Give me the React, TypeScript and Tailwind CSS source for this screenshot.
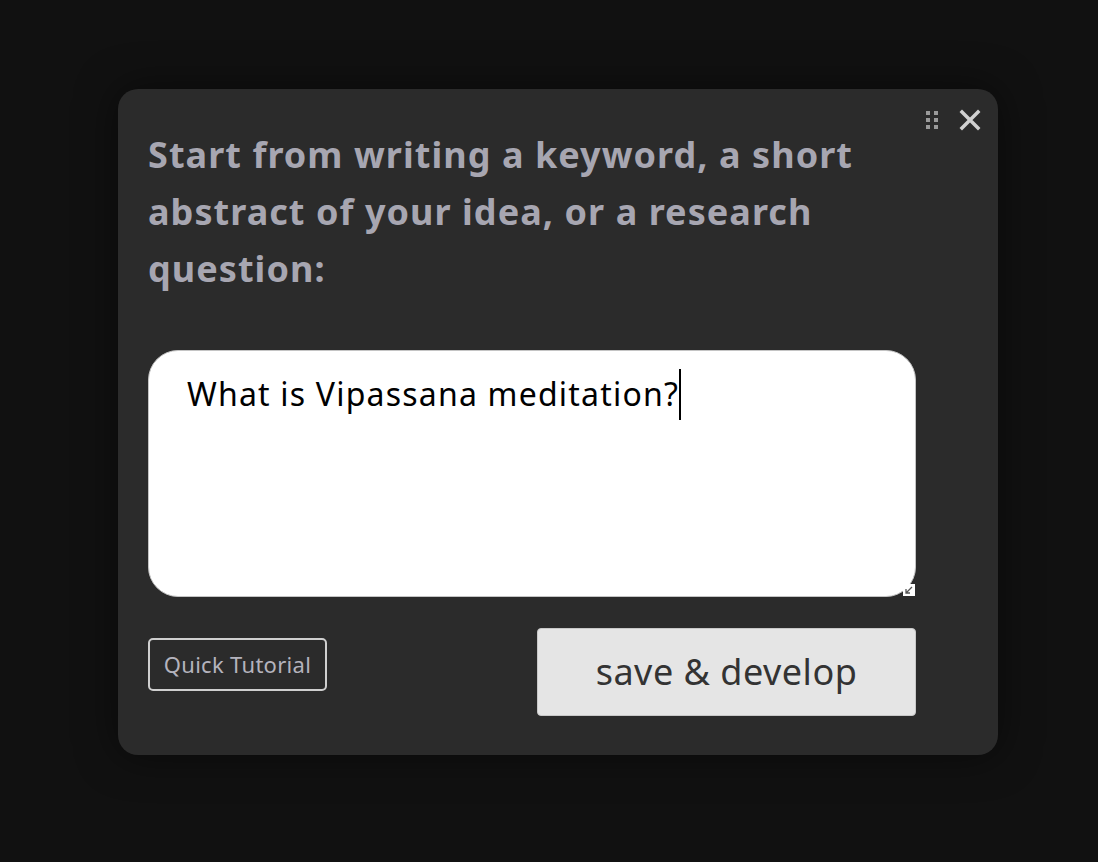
import React from "react";

export default function App() {
  return (
    <div className="w-[1098px] h-[862px] bg-[#111111] flex items-start justify-start pl-[118px] pt-[89px]" style={{ fontFamily: '"Noto Sans", sans-serif' }}>
      <div className="relative w-[880px] h-[666px] bg-[#2b2b2b] rounded-[20px] shadow-[0_0_40px_rgba(0,0,0,0.5)] px-[30px] pt-[37px]">
        <div className="absolute top-[20px] right-[17px] flex items-center gap-[20px]">
          <svg width="14" height="18" viewBox="0 0 14 18">
            <rect x="1" y="0" width="4" height="4" fill="#9a9a9a" />
            <rect x="9" y="0" width="4" height="4" fill="#9a9a9a" />
            <rect x="1" y="7" width="4" height="4" fill="#9a9a9a" />
            <rect x="9" y="7" width="4" height="4" fill="#9a9a9a" />
            <rect x="1" y="14" width="4" height="4" fill="#9a9a9a" />
            <rect x="9" y="14" width="4" height="4" fill="#9a9a9a" />
          </svg>
          <svg width="22" height="22" viewBox="0 0 22 22">
            <path d="M3 3 L19 19 M19 3 L3 19" stroke="#d0d0d0" strokeWidth="3.5" strokeLinecap="square" />
          </svg>
        </div>
        <h1 className="text-[36px] font-bold leading-[57px] tracking-[1.05px] text-[#a7a6b1] w-[720px]" style={{ fontFamily: '"Noto Sans", sans-serif' }}>
          Start from writing a keyword, a short abstract of your idea, or a research question:
        </h1>
        <div className="relative mt-[53px] w-[768px] h-[247px] bg-white rounded-[30px] border-[1.5px] border-[#c4c4c4] pl-[38px] pt-[18px]">
          <span className="text-[32px] text-black leading-[46px] tracking-[1.2px]" style={{ fontFamily: '"Noto Sans", sans-serif' }}>
            What is Vipassana meditation?
          </span>
          <span className="inline-block align-[-14px] w-[2px] h-[51px] bg-black" />
          <div className="absolute right-0 bottom-0 w-[12px] h-[12px] bg-white flex items-center justify-center">
            <svg width="8" height="8" viewBox="0 0 8 8">
              <path d="M7 1 L1 7 M1 3 L1 7 L5 7" stroke="#555" strokeWidth="1.3" fill="none" />
            </svg>
          </div>
        </div>
        <div className="mt-[31px] flex items-start justify-between w-[768px]">
          <button className="mt-[10px] h-[53px] w-[179px] border-2 border-[#cfcfcf] rounded-[5px] text-[22px] tracking-[0.3px] text-[#b4b3bd] flex items-center justify-center">
            Quick Tutorial
          </button>
          <button className="h-[88px] w-[379px] bg-[#e5e5e5] border border-[#c8c8c8] rounded-[4px] text-[36px] text-[#333333] tracking-[0.5px] flex items-center justify-center">
            save &amp; develop
          </button>
        </div>
      </div>
    </div>
  );
}
